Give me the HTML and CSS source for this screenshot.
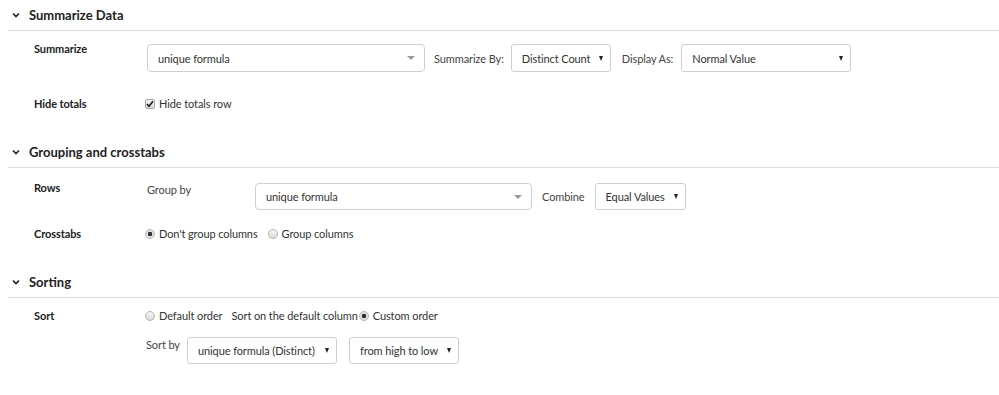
FILE: index.html
```html
<!DOCTYPE html>
<html lang="en">
<head>
  <meta charset="UTF-8" />
  <title>Report Options</title>
  <link rel="stylesheet" href="styles.css">
</head>
<body>
  <div class="panel">

    <!-- Summarize -->
    <section class="section">
      <div class="section-head">
        <svg class="chev" width="8" height="6" viewBox="0 0 8 6"><polyline points="1,1.5 4,4.5 7,1.5" fill="none" stroke="#222" stroke-width="1.6"/></svg>
        <h2>Summarize Data</h2>
      </div>
      <div class="section-body body-summary">
        <div class="row">
          <div class="label label-tall">Summarize</div>
          <div class="controls">
            <div class="combo combo-lg w-278"><span>unique formula</span><i class="caret-soft"></i></div>
            <span class="inline-label">Summarize By:</span>
            <div class="select select-lg w-100"><span>Distinct Count</span><i class="caret"></i></div>
            <span class="inline-label display">Display As:</span>
            <div class="select select-lg w-170"><span>Normal Value</span><i class="caret"></i></div>
          </div>
        </div>
        <div class="row row-line gap-24">
          <div class="label">Hide totals</div>
          <div class="controls">
            <label class="option">
              <span class="check"><svg width="8" height="8" viewBox="0 0 8 8"><polyline points="1,4.2 3,6.3 7,1.3" fill="none" stroke="#222" stroke-width="1.7"/></svg></span>
              Hide totals row
            </label>
          </div>
        </div>
      </div>
    </section>

    <!-- Grouping -->
    <section class="section">
      <div class="section-head">
        <svg class="chev" width="8" height="6" viewBox="0 0 8 6"><polyline points="1,1.5 4,4.5 7,1.5" fill="none" stroke="#222" stroke-width="1.6"/></svg>
        <h2>Grouping and crosstabs</h2>
      </div>
      <div class="section-body body-group">
        <div class="row">
          <div class="label label-tall">Rows</div>
          <div class="controls">
            <span class="sub-label">Group by</span>
            <div class="combo w-277"><span>unique formula</span><i class="caret-soft"></i></div>
            <span class="inline-label combine">Combine</span>
            <div class="select w-91"><span>Equal Values</span><i class="caret"></i></div>
          </div>
        </div>
        <div class="row row-line gap-16">
          <div class="label">Crosstabs</div>
          <div class="controls">
            <label class="option wide"><span class="radio on"></span>Don't group columns</label>
            <label class="option"><span class="radio"></span>Group columns</label>
          </div>
        </div>
      </div>
    </section>

    <!-- Sorting -->
    <section class="section">
      <div class="section-head">
        <svg class="chev" width="8" height="6" viewBox="0 0 8 6"><polyline points="1,1.5 4,4.5 7,1.5" fill="none" stroke="#222" stroke-width="1.6"/></svg>
        <h2>Sorting</h2>
      </div>
      <div class="section-body body-sort">
        <div class="row row-line">
          <div class="label">Sort</div>
          <div class="controls">
            <label class="option"><span class="radio"></span>Default order</label>
            <span class="option-note">Sort on the default column</span>
            <label class="option"><span class="radio on"></span>Custom order</label>
          </div>
        </div>
        <div class="row gap-14">
          <div class="label"></div>
          <div class="controls">
            <span class="sort-label">Sort by</span>
            <div class="select w-150"><span>unique formula (Distinct)</span><i class="caret"></i></div>
            <div class="select w-110 next"><span>from high to low</span><i class="caret"></i></div>
          </div>
        </div>
      </div>
    </section>

  </div>
</body>
</html>
```

FILE: styles.css
```css
body {
  margin: 0;
  font-family: Lato, "Open Sans", sans-serif;
  font-size: 11px;
  letter-spacing: -0.1px;
  color: #333;
  background: #fff;
}
.panel {
  padding-left: 8px;
}
.section-head {
  display: flex;
  align-items: center;
  height: 30px;
  padding-left: 3px;
  border-bottom: 1px solid #dcdcdc;
}
.section-head h2 {
  margin: 0;
  font-size: 13px;
  font-weight: 700;
  letter-spacing: 0;
  color: #222;
}
.chev {
  margin-left: 1px;
  margin-right: 9px;
  margin-top: -1px;
}
.section-body {
  padding-left: 26px;
  padding-bottom: 25px;
}
.body-summary { padding-top: 13px; }
.body-group { padding-top: 15px; }
.body-sort { padding-top: 10px; padding-bottom: 30px; }

.row {
  display: grid;
  grid-template-columns: 113px 1fr;
  align-items: start;
}
.row-line {
  line-height: 16px;
}
.gap-24 { margin-top: 24px; }
.gap-16 { margin-top: 16px; }
.gap-14 { margin-top: 13px; }

.label {
  font-weight: 700;
  color: #222;
  line-height: 16px;
}
.label-tall {
  margin-top: -3px;
}
.controls {
  display: flex;
  align-items: center;
  white-space: nowrap;
}
.row:not(.row-line) .controls {
  align-items: flex-start;
}
.row:not(.row-line) .inline-label {
  align-self: center;
}

/* selects */
.select, .combo {
  box-sizing: border-box;
  display: flex;
  align-items: center;
  justify-content: space-between;
  height: 27px;
  border: 1px solid #cfcfcf;
  border-radius: 3px;
  background: #fff;
  color: #333;
  padding: 0 7px 0 10px;
}
.select-lg, .combo-lg {
  height: 28px;
}
.combo {
  border-radius: 4px;
  padding-right: 9px;
}
.caret {
  width: 0;
  height: 0;
  border-left: 2.5px solid transparent;
  border-right: 2.5px solid transparent;
  border-top: 5px solid #222;
}
.caret-soft {
  width: 0;
  height: 0;
  border-left: 4.5px solid transparent;
  border-right: 4.5px solid transparent;
  border-top: 4px solid #9a9a9a;
}
.w-278 { width: 278px; }
.w-277 { width: 277px; }
.w-100 { width: 100px; }
.w-170 { width: 170px; }
.w-91 { width: 91px; }
.w-150 { width: 150px; }
.w-110 { width: 110px; }
.next { margin-left: 12px; }

.inline-label {
  margin: 0 7px 0 9px;
  color: #444;
}
.display {
  margin: 0 8px 0 11px;
}
.combine {
  margin: 0 10px 0 10px;
}
.sub-label {
  width: 108px;
  line-height: 16px;
  margin-top: -1px;
  color: #444;
}
.sort-label {
  width: 41px;
  margin-left: -1px;
  line-height: 16px;
  color: #444;
}

/* checkbox and radio */
.option {
  display: flex;
  align-items: center;
  margin-left: -2px;
  margin-right: 9px;
  color: #333;
}
.option.wide {
  margin-right: 12px;
}
.option-note {
  margin-right: 3px;
  color: #333;
}
.check {
  box-sizing: border-box;
  width: 10px;
  height: 10px;
  margin-right: 4px;
  border: 1px solid #a9a9a9;
  border-radius: 2px;
  background: linear-gradient(#f4f4f4, #dcdcdc);
  display: flex;
  align-items: center;
  justify-content: center;
}
.radio {
  box-sizing: border-box;
  width: 10px;
  height: 10px;
  margin-right: 4px;
  border: 1px solid #b4b4b4;
  border-radius: 50%;
  background: linear-gradient(#f6f6f6, #dadada);
}
.radio.on {
  background: radial-gradient(circle, #333 0, #333 2px, #e6e6e6 2.6px, #dcdcdc 100%);
}
```
